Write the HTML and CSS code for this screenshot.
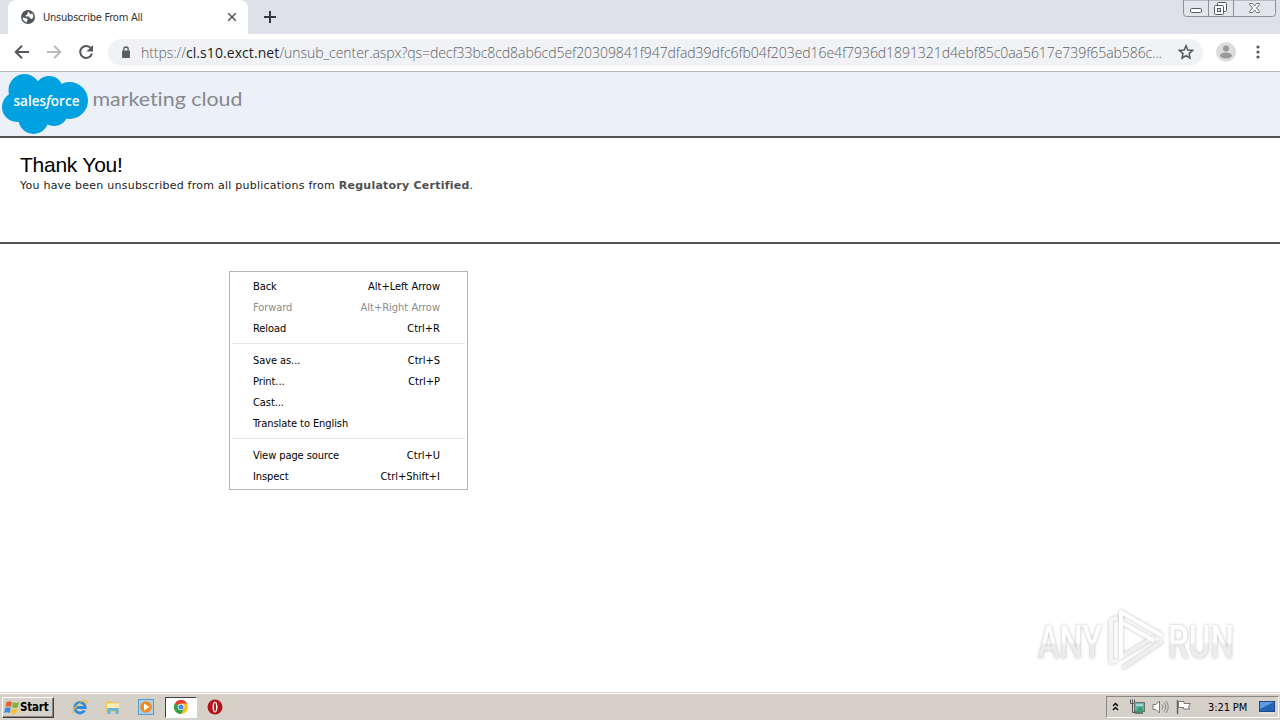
FILE: index.html
```html
<!DOCTYPE html>
<html lang="en">
<head>
    <meta charset="UTF-8">
    <meta name="viewport" content="width=device-width, initial-scale=1.0">
    <title>Unsubscribe From All</title>
    <link rel="stylesheet" href="styles.css">
</head>
<body>
    <div class="tabstrip">
        <div class="tab">
            <svg class="globe" width="14" height="14" viewBox="0 0 14 14">
                <circle cx="7" cy="7" r="7" fill="#50555a"/>
                <path d="M1.500 7.500L5 8l2 1.500-1 1.200L6 12.500C3.500 12 1.700 10 1.500 7.500zM8 1.700L6.200 3 6.500 4.500 4.500 5.200 5 6.500 8 6.600 9.200 8.500 11 9 12.400 7C12.500 5.500 12 4.300 11 3.200L9.500 4.500 8.500 3.500z" fill="#fff"/>
            </svg>
            <span class="tab-title">Unsubscribe From All</span>
            <svg class="tab-close" width="10" height="10" viewBox="0 0 10 10">
                <path d="M1.200 1.200l7.600 7.600M8.800 1.200L1.200 8.800" stroke="#55585c" stroke-width="1.600"/>
            </svg>
        </div>
        <svg class="new-tab" width="12" height="12" viewBox="0 0 12 12">
            <path d="M6 0v12M0 6h12" stroke="#35383c" stroke-width="2"/>
        </svg>
        <svg class="window-buttons" width="94" height="18" viewBox="0 0 94 18">
            <path d="M.5 0v13.500q0 3 3 3h86q3 0 3-3V0z" fill="#e3e5ea" stroke="#8c9096"/>
            <path d="M25.500 0v16M50.500 0v16" stroke="#8c9096"/>
            <rect x="7.500" y="8.500" width="11" height="4" rx="1" fill="#fff" stroke="#555a60"/>
            <rect x="34.500" y="2.500" width="9" height="9" rx="1" fill="#fff" stroke="#555a60"/>
            <rect x="31.500" y="5.500" width="9" height="9" rx="1" fill="#fff" stroke="#555a60"/>
            <rect x="34.500" y="8.500" width="3" height="3" fill="#e3e5ea" stroke="#555a60"/>
            <path d="M66.500 3.500h3l2 2.500 2-2.500h3v1L73.500 8l3 3.500v1h-3l-2-2.500-2 2.500h-3v-1l3-3.500-3-3.500z" fill="#fff" stroke="#6a6e74"/>
        </svg>
    </div>

    <div class="toolbar">
        <div class="nav">
            <svg width="16" height="16" viewBox="0 0 16 16">
                <path d="M15 8H2.500M8 1.700L1.700 8 8 14.300" fill="none" stroke="#55585c" stroke-width="2"/>
            </svg>
            <svg width="16" height="16" viewBox="0 0 16 16">
                <path d="M1 8h12.500M8 1.700L14.300 8 8 14.300" fill="none" stroke="#b9bbbe" stroke-width="2"/>
            </svg>
            <svg width="16" height="16" viewBox="0 0 16 16">
                <path d="M13.300 4.700A6 6 0 1 0 14 9.500" fill="none" stroke="#55585c" stroke-width="2"/>
                <path d="M15 1v6.500H8.500z" fill="#55585c"/>
            </svg>
        </div>
        <div class="omnibox">
            <svg width="10" height="13" viewBox="0 0 10 13">
                <rect x="1" y="4.500" width="8" height="7.500" rx="1" fill="#5a5e62"/>
                <path d="M2.800 5V3.200a2.200 2.200 0 0 1 4.400 0V5" fill="none" stroke="#5a5e62" stroke-width="1.300"/>
            </svg>
            <span class="url">https://<span class="host">cl.s10.exct.net</span>/unsub_center.aspx?qs=decf33bc8cd8ab6cd5ef20309841f947dfad39dfc6fb04f203ed16e4f7936d1891321d4ebf85c0aa5617e739f65ab586c...</span>
            <svg class="star" width="16" height="16" viewBox="0 0 16 16">
                <path d="M8 1.800l1.800 4.300 4.700.4-3.500 3.100 1 4.600-4-2.500-4 2.500 1-4.600L1.500 6.500l4.700-.4z" fill="none" stroke="#55585c" stroke-width="1.500"/>
            </svg>
        </div>
        <svg class="avatar" width="20" height="20" viewBox="0 0 20 20">
            <circle cx="10" cy="10" r="10" fill="#dcdcdc"/>
            <circle cx="10" cy="6.500" r="3" fill="#999"/>
            <ellipse cx="10" cy="13.500" rx="6" ry="3" fill="#999"/>
        </svg>
        <svg class="dots" width="4" height="14" viewBox="0 0 4 14">
            <circle cx="2" cy="2" r="1.600" fill="#55585c"/>
            <circle cx="2" cy="7" r="1.600" fill="#55585c"/>
            <circle cx="2" cy="12" r="1.600" fill="#55585c"/>
        </svg>
    </div>

    <div class="page">
        <div class="banner">
            <svg width="250" height="64" viewBox="0 0 250 64">
                <g fill="#00a1e0">
                    <circle cx="24.500" cy="18" r="16"/>
                    <circle cx="49" cy="18" r="14"/>
                    <circle cx="69.500" cy="28.500" r="18.500"/>
                    <circle cx="17" cy="35" r="15"/>
                    <circle cx="33.500" cy="47" r="15"/>
                    <circle cx="54" cy="40" r="14"/>
                    <path d="M16 14h44v30H16z"/>
                </g>
                <text x="13.500" y="34" class="logo-name" textLength="66" lengthAdjust="spacingAndGlyphs">sales<tspan font-style="italic">f</tspan>orce</text>
                <text x="92.500" y="34" class="logo-product" textLength="150" lengthAdjust="spacingAndGlyphs">marketing cloud</text>
            </svg>
        </div>
        <div class="message">
            <h1>Thank You!</h1>
            <p>You have been unsubscribed from all publications from <b>Regulatory Certified</b>.</p>
        </div>
    </div>

    <div class="menu">
        <div class="item"><span>Back</span><span>Alt+Left Arrow</span></div>
        <div class="item disabled"><span>Forward</span><span>Alt+Right Arrow</span></div>
        <div class="item"><span>Reload</span><span>Ctrl+R</span></div>
        <hr>
        <div class="item"><span>Save as...</span><span>Ctrl+S</span></div>
        <div class="item"><span>Print...</span><span>Ctrl+P</span></div>
        <div class="item"><span>Cast...</span></div>
        <div class="item"><span>Translate to English</span></div>
        <hr>
        <div class="item"><span>View page source</span><span>Ctrl+U</span></div>
        <div class="item"><span>Inspect</span><span>Ctrl+Shift+I</span></div>
    </div>

    <svg class="watermark" width="240" height="80" viewBox="0 0 240 80">
        <defs>
            <linearGradient id="fade" x1="0" y1="0" x2="0" y2="1">
                <stop offset=".5" stop-color="#fff"/>
                <stop offset=".55" stop-color="#ececec"/>
            </linearGradient>
        </defs>
        <text x="8" y="53" textLength="64" lengthAdjust="spacingAndGlyphs">ANY</text>
        <text x="138" y="53" textLength="66" lengthAdjust="spacingAndGlyphs">RUN</text>
        <g fill="none" stroke-width="4" stroke-linejoin="round" stroke-linecap="round">
            <path d="M86 13l-5 2v42l5-1" stroke="#f6f6f6"/>
            <path d="M94 62l37-25" stroke="#efefef"/>
            <path d="M91 52l32-19" stroke="#efefef"/>
            <path d="M91 52V7l40 23M91 17l32 18" stroke="#fff"/>
        </g>
    </svg>

    <div class="taskbar">
        <div class="start">
            <svg width="16" height="15" viewBox="0 0 16 15">
                <path d="M2.500 2Q5 .500 8 2L7 7Q4.500 5.500 1.500 7z" fill="#e8632b"/>
                <path d="M9 2.300q3 1.500 6 0L13.800 7.300q-3 1.500-5.800 0z" fill="#7db53c"/>
                <path d="M1.200 8q2.800-1.500 5.500 0L5.700 13Q3 11.500 0 13z" fill="#3e8ddd"/>
                <path d="M7.700 8.500q3 1.500 5.800 0l-1.200 4.700q-2.800 1.500-5.600 0z" fill="#f7c331"/>
            </svg>
            <span>Start</span>
        </div>
        <div class="launchers">
            <svg width="16" height="16" viewBox="0 0 16 16">
                <path d="M12.500 11.500A5.300 5.300 0 1 1 13.300 8.500H4.500" fill="none" stroke="#2b8bdc" stroke-width="2.800"/>
                <path d="M1.500 14.500C-1 12 8 1 14.500 1.500c1 .5.500 2-.5 3" fill="none" stroke="#efbc32" stroke-width="1.200"/>
            </svg>
            <svg width="16" height="16" viewBox="0 0 16 16">
                <path d="M1 2h5l1 1.500h7V13H1z" fill="#e9c863"/>
                <path d="M2 4.500h12V9H2z" fill="#fbf0b3"/>
                <path d="M2.500 15V9h11v6h-3v-3h-5v3z" fill="#67b5dc"/>
            </svg>
            <svg width="16" height="16" viewBox="0 0 16 16">
                <rect x=".5" y=".5" width="15" height="15" fill="#a9d0ef" stroke="#5a9bd0"/>
                <circle cx="8" cy="8" r="5.800" fill="#f28a1a"/>
                <path d="M6 4.500L11.500 8 6 11.500z" fill="#fff"/>
            </svg>
        </div>
        <div class="running">
            <svg width="14" height="14" viewBox="0 0 14 14">
                <circle cx="7" cy="7" r="7" fill="#fbc116"/>
                <path d="M7 7L.9 3.500A7 7 0 0 1 13.100 3.500H7z" fill="#e33b2e"/>
                <path d="M7 7L.9 3.500A7 7 0 0 0 7 14l3-5.300z" fill="#2ca24c"/>
                <circle cx="7" cy="7" r="3.300" fill="#fff"/>
                <circle cx="7" cy="7" r="2.600" fill="#4a87ea"/>
            </svg>
        </div>
        <svg class="opera" width="16" height="16" viewBox="0 0 16 16">
            <circle cx="8" cy="8" r="7.500" fill="#b5131b"/>
            <ellipse cx="8" cy="8" rx="2.500" ry="5.500" fill="#fff"/>
            <ellipse cx="8" cy="8" rx="1" ry="4.500" fill="#b5131b"/>
        </svg>
        <div class="tray">
            <svg width="7" height="10" viewBox="0 0 7 10">
                <path d="M1 4l2.500-2.500L6 4M1 8l2.500-2.500L6 8" fill="none" stroke="#000" stroke-width="1.400"/>
            </svg>
            <svg class="network" width="16" height="16" viewBox="0 0 16 16">
                <path d="M1.500.5v4h4v-4M3.500.5v13h3" fill="none" stroke="#555"/>
                <rect x="5.500" y="3.500" width="10" height="9" fill="#62b5a6" stroke="#69726f"/>
                <path d="M7 5h7v2H7z" fill="#9ed8cd"/>
                <path d="M6 14h8" stroke="#68716e" stroke-width="2"/>
                <circle cx="11" cy="11" r="3" fill="#3c9c72"/>
            </svg>
            <svg class="sound" width="17" height="16" viewBox="0 0 17 16">
                <path d="M1 5.500h3L7.500 2v12L4 10.500H1z" fill="#fff" stroke="#777"/>
                <path d="M10 5.500q2 2.500 0 5M12 3.500q3.500 4.500 0 9M14 2q4.500 6 0 12" fill="none" stroke="#858585"/>
            </svg>
            <svg class="flag" width="16" height="16" viewBox="0 0 16 16">
                <path d="M1.500 1v14" stroke="#666" stroke-width="1.500"/>
                <path d="M2.500 2.500H8v2h6.500l-2 3 1 2.500H7.500V8.500h-5z" fill="#fff" stroke="#777"/>
            </svg>
            <span class="clock">3:21 PM</span>
            <svg class="desktop" width="16" height="13" viewBox="0 0 16 13">
                <rect x=".5" y=".5" width="15" height="10" fill="#2563b5" stroke="#20468a"/>
                <path d="M1 1h14L1 8z" fill="#5b9de4"/>
                <path d="M1 12h14" stroke="#eee"/>
            </svg>
        </div>
    </div>
</body>
</html>
```
FILE: styles.css
```css
body {
    margin: 0;
    width: 1280px;
    height: 720px;
    overflow: hidden;
    display: flex;
    flex-direction: column;
    background: #fff;
    color: #000;
    font-family: "DejaVu Sans Condensed", "DejaVu Sans", sans-serif;
    font-stretch: condensed;
    font-size: 11px;
}
svg {
    display: block;
    flex: none;
}
.tabstrip {
    height: 34px;
    display: flex;
    background: #dee1e8;
}
.tab {
    width: 240px;
    box-sizing: border-box;
    margin-left: 8px;
    padding: 0 11px 0 13px;
    display: flex;
    align-items: center;
    background: #fff;
    border-radius: 8px 8px 0 0;
}
.tab-title {
    flex: 1;
    margin-left: 8px;
    color: #303236;
    letter-spacing: -0.22px;
}
.new-tab {
    margin: 11px 0 0 16px;
}
.window-buttons {
    margin-left: auto;
    margin-right: 3px;
}
.toolbar {
    height: 37px;
    padding-bottom: 1px;
    box-sizing: border-box;
    display: flex;
    align-items: center;
    border-bottom: 1px solid #b4b6b8;
    flex-basis: 38px;
    flex-shrink: 0;
}
.nav {
    display: flex;
    gap: 16px;
    margin-left: 14px;
}
.omnibox {
    width: 1095px;
    height: 27px;
    box-sizing: border-box;
    margin-left: 14px;
    padding: 0 9px 0 13px;
    display: flex;
    align-items: center;
    background: #f0f2f5;
    border-radius: 14px;
}
.url {
    flex: 1;
    margin-left: 10px;
    font-family: "Open Sans", sans-serif;
    font-stretch: normal;
    font-weight: 300;
    font-size: 14px;
    letter-spacing: -0.06px;
    white-space: nowrap;
    color: #5c6166;
}
.host {
    color: #1c1e22;
    font-weight: 400;
    letter-spacing: 0.08px;
}
.avatar {
    margin-left: 13px;
}
.dots {
    margin-left: 20px;
}
.page {
    flex: 1;
}
.banner {
    height: 64px;
    background: #ecf0f8;
    border-bottom: 2px solid #505254;
}
.logo-name {
    font: 600 14px "Open Sans", sans-serif;
    fill: #fff;
}
.logo-product {
    font: 400 20px Lato, sans-serif;
    font-variant-ligatures: none;
    fill: #85898d;
}
.message {
    height: 104px;
    border-bottom: 2px solid #505254;
    padding-left: 20px;
}
.message h1 {
    margin: 0;
    padding-top: 14px;
    font: 400 21px/26px "Liberation Sans", Arial, sans-serif;
    letter-spacing: -0.25px;
}
.message p {
    margin: 0;
    font: 11px/15px "DejaVu Sans", Verdana, sans-serif;
    font-stretch: normal;
    letter-spacing: 0.24px;
    white-space: nowrap;
    color: #222;
}
.message b {
    color: #505050;
}
.menu {
    position: absolute;
    left: 229px;
    top: 271px;
    width: 237px;
    height: 213px;
    padding-top: 4px;
    background: #fff;
    border: 1px solid #b5b5b5;
}
.item {
    height: 21px;
    padding: 0 27px 0 23px;
    display: flex;
    align-items: center;
    justify-content: space-between;
    letter-spacing: -0.08px;
}
.item span + span {
    letter-spacing: 0;
}
.disabled {
    color: #8c8c8c;
}
.menu hr {
    height: 1px;
    margin: 4px 2px 6px;
    border: 0;
    background: #e6e6e6;
}
.watermark {
    position: absolute;
    left: 1030px;
    top: 605px;
    filter: drop-shadow(0 0 1.5px rgba(0, 0, 0, 0.28));
}
.watermark text {
    font: 500 46px Roboto, sans-serif;
    fill: url(#fade);
}
.taskbar {
    height: 26px;
    display: flex;
    align-items: center;
    background: #d5d0c8;
    border-top: 1px solid #fff;
    box-shadow: 0 -1px 0 #d5d0c8;
}
.start {
    width: 52px;
    height: 21px;
    box-sizing: border-box;
    margin-left: 2px;
    padding-left: 1px;
    display: flex;
    align-items: center;
    border: 1px solid;
    border-color: #fff #404040 #404040 #fff;
    box-shadow: inset -1px -1px 0 #8a8680;
    font-weight: bold;
    font-size: 11.5px;
    letter-spacing: -0.2px;
}
.launchers {
    display: flex;
    gap: 17px;
    margin-left: 18px;
}
.running {
    width: 32px;
    height: 21px;
    box-sizing: border-box;
    margin-left: 11px;
    display: flex;
    align-items: center;
    justify-content: center;
    background: #fff;
    border: 1px solid;
    border-color: #404040 #fff #fff #404040;
}
.opera {
    margin-left: 10px;
}
.tray {
    width: 173px;
    height: 22px;
    box-sizing: border-box;
    margin-left: auto;
    margin-right: 1px;
    padding-left: 5px;
    display: flex;
    align-items: center;
    border: 1px solid;
    border-color: #8a8680 #fff #fff #8a8680;
}
.network {
    margin-left: 10px;
}
.sound {
    margin-left: 7px;
}
.flag {
    margin-left: 7px;
}
.clock {
    width: 40px;
    margin-left: 16px;
    white-space: nowrap;
    letter-spacing: -0.1px;
}
.desktop {
    margin-left: 11px;
}
```
